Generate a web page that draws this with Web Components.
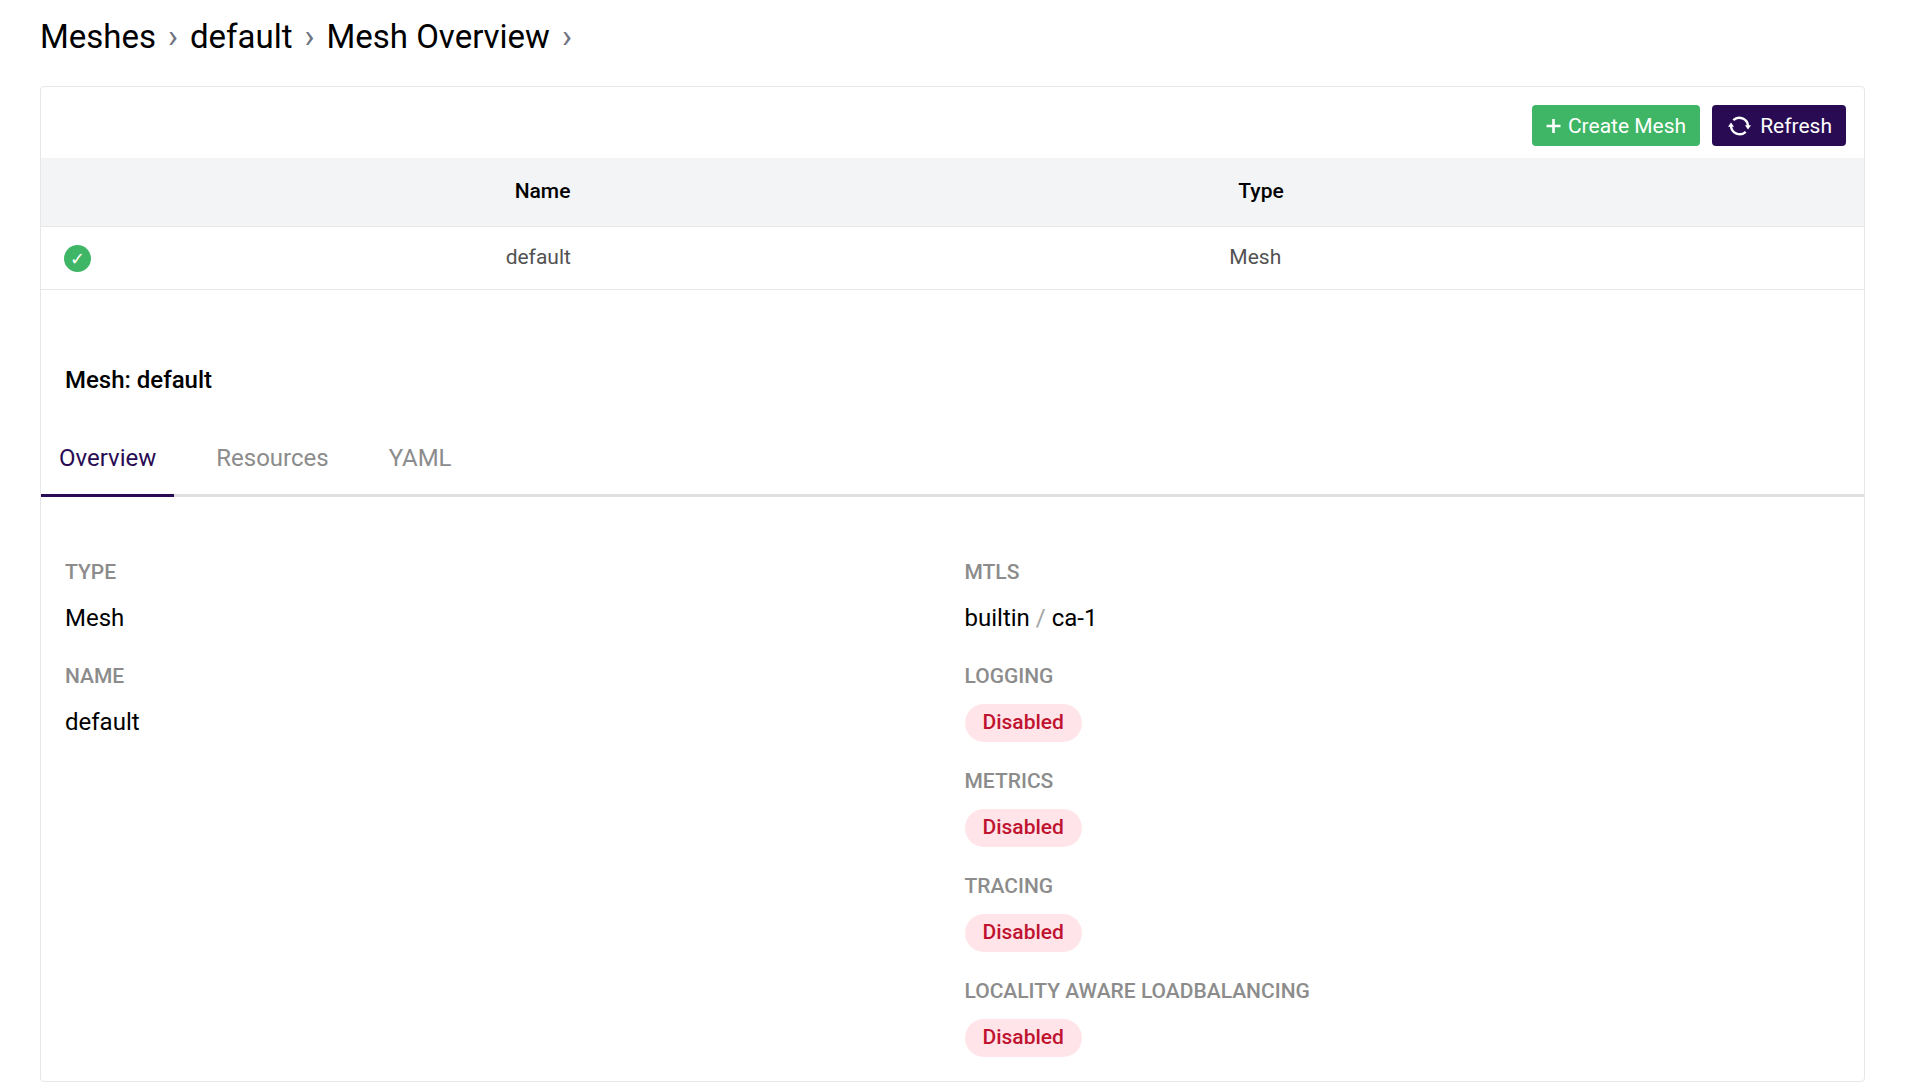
<!DOCTYPE html>
<html lang="en">
<head>
<meta charset="utf-8">
<title>Mesh Overview</title>
<style>
  body {
    margin: 0;
    background: #fff;
    color: #000;
    font-family: Roboto, "Liberation Sans", sans-serif;
    font-size: 24px;
    line-height: 36px;
    --green: #3eb665;
    --purple: #290b53;
    --line: #e7e7e8;
    --muted: #8c8c8c;
  }
</style>
</head>
<body>
<mesh-page>
  <crumb-trail slot="trail"></crumb-trail>
  <tool-bar></tool-bar>
  <mesh-table></mesh-table>
  <mesh-tabs heading="Mesh: default"></mesh-tabs>
  <detail-columns>
    <dl-item slot="left" label="Type">Mesh</dl-item>
    <dl-item slot="left" label="Name">default</dl-item>
    <dl-item slot="right" label="mTLS">builtin <span style="color:#a3a3a3">/</span> ca-1</dl-item>
    <dl-item slot="right" label="Logging"><status-badge>Disabled</status-badge></dl-item>
    <dl-item slot="right" label="Metrics"><status-badge>Disabled</status-badge></dl-item>
    <dl-item slot="right" label="Tracing"><status-badge>Disabled</status-badge></dl-item>
    <dl-item slot="right" label="Locality Aware Loadbalancing"><status-badge>Disabled</status-badge></dl-item>
  </detail-columns>
</mesh-page>
<script>
  const define = (name, render) => customElements.define(name, class extends HTMLElement {
    connectedCallback() {
      if (this.shadowRoot) return;
      this.attachShadow({ mode: "open" }).innerHTML = render(this);
    }
  });

  define("mesh-page", () => `
    <style>
      :host { display: block; padding: 12px 65px 8px 40px; }
      main { margin-top: 24px; border: 1px solid var(--line); border-radius: 4px; }
    </style>
    <slot name="trail"></slot>
    <main><slot></slot></main>`);

  define("crumb-trail", () => `
    <style>
      :host { display: block; font-size: 33px; line-height: 50px; }
      ol { display: flex; margin: 0; padding: 0; list-style: none; }
      li::after { content: "›"; color: #6f7381; padding: 0 12px; }
      a { color: inherit; text-decoration: none; }
    </style>
    <nav aria-label="Breadcrumb"><ol>
      <li><a href="#meshes">Meshes</a></li>
      <li><a href="#default">default</a></li>
      <li><a href="#overview">Mesh Overview</a></li>
    </ol></nav>`);

  define("tool-bar", () => `
    <style>
      :host { display: flex; justify-content: flex-end; gap: 12px; padding: 18px 18px 12px; }
      button {
        display: flex; align-items: center; height: 41px; padding: 1px 14px 0;
        border: 0; border-radius: 4px; color: #fff; background: var(--green);
        font: 21px/40px Roboto, sans-serif; cursor: pointer;
      }
      .refresh { background: var(--purple); padding-left: 16px; }
      .plus { margin-right: 7px; }
      .arrows { margin-right: 9px; }
    </style>
    <button type="button"><svg class="plus" width="15" height="16" viewBox="0 0 15 16" aria-hidden="true"><path d="M7.5 1v14M.5 8h14" stroke="#fff" stroke-width="2.6" fill="none"/></svg>Create Mesh</button>
    <button type="button" class="refresh"><svg class="arrows" width="23" height="20" viewBox="0 0 23 20" aria-hidden="true"><path d="M5.3 4.2A8.7 8.7 0 0 1 20 10M17.7 15.8A8.7 8.7 0 0 1 3 10" stroke="#fff" stroke-width="2.4" fill="none"/><path d="M17 9.2h6L20 13.4zM0 10.8h6L3 6.6z" fill="#fff"/></svg>Refresh</button>`);

  define("mesh-table", () => `
    <style>
      :host { display: block; font-size: 21px; }
      table { width: 100%; border-collapse: collapse; table-layout: fixed; text-align: left; }
      .state { width: 24.5%; }
      .name { width: 39.7%; }
      th, td { box-sizing: border-box; border-bottom: 1px solid var(--line); line-height: 30px; }
      th { height: 68px; padding: 0 27px 1px; background: #f3f4f6; font-weight: 500; }
      td { height: 63px; padding: 0 18px 1px; color: #525252; }
      td:first-child { padding: 2px 23px 0; }
      .ok {
        display: block; width: 27px; height: 27px; border-radius: 50%;
        background: var(--green); color: #fff; text-align: center;
        font: 18px/27px "DejaVu Sans", sans-serif;
      }
    </style>
    <table>
      <colgroup><col class="state"><col class="name"><col></colgroup>
      <thead><tr><th></th><th scope="col">Name</th><th scope="col">Type</th></tr></thead>
      <tbody><tr><td><span class="ok">✓</span></td><td>default</td><td>Mesh</td></tr></tbody>
    </table>`);

  define("mesh-tabs", el => `
    <style>
      :host { display: block; padding-top: 72px; }
      h1 { margin: 0 24px 24px; font-size: 24px; line-height: 36px; font-weight: 500; }
      div { display: flex; gap: 24px; box-shadow: inset 0 -3px #e0e0e0; }
      button {
        padding: 18px; border: 0; border-bottom: 3px solid transparent;
        background: none; color: var(--muted); font: inherit; cursor: pointer;
      }
      [aria-selected=true] { color: var(--purple); border-color: var(--purple); }
    </style>
    <h1>${el.getAttribute("heading")}</h1>
    <div role="tablist">
      <button type="button" role="tab" aria-selected="true">Overview</button>
      <button type="button" role="tab" aria-selected="false">Resources</button>
      <button type="button" role="tab" aria-selected="false">YAML</button>
    </div>`);

  define("detail-columns", () => `
    <style>
      :host { display: grid; grid-template-columns: 1fr 1fr; gap: 24px; padding: 60px 24px 24px; }
      div { display: flex; flex-direction: column; gap: 24px; }
    </style>
    <div><slot name="left"></slot></div>
    <div><slot name="right"></slot></div>`);

  define("dl-item", el => `
    <style>
      :host { display: block; }
      h2 {
        margin: 0 0 13px; color: var(--muted); font-size: 21px; line-height: 30px;
        font-weight: 500; text-transform: uppercase;
      }
      div { line-height: 37px; }
    </style>
    <h2>${el.getAttribute("label")}</h2>
    <div><slot></slot></div>`);

  define("status-badge", () => `
    <style>
      :host {
        display: block; width: fit-content; padding: 0 18px 2px; border-radius: 19px;
        background: #ffe5e9; color: #bf1330; font-size: 21px; line-height: 36px; font-weight: 500;
      }
    </style>
    <slot></slot>`);
</script>
</body>
</html>
